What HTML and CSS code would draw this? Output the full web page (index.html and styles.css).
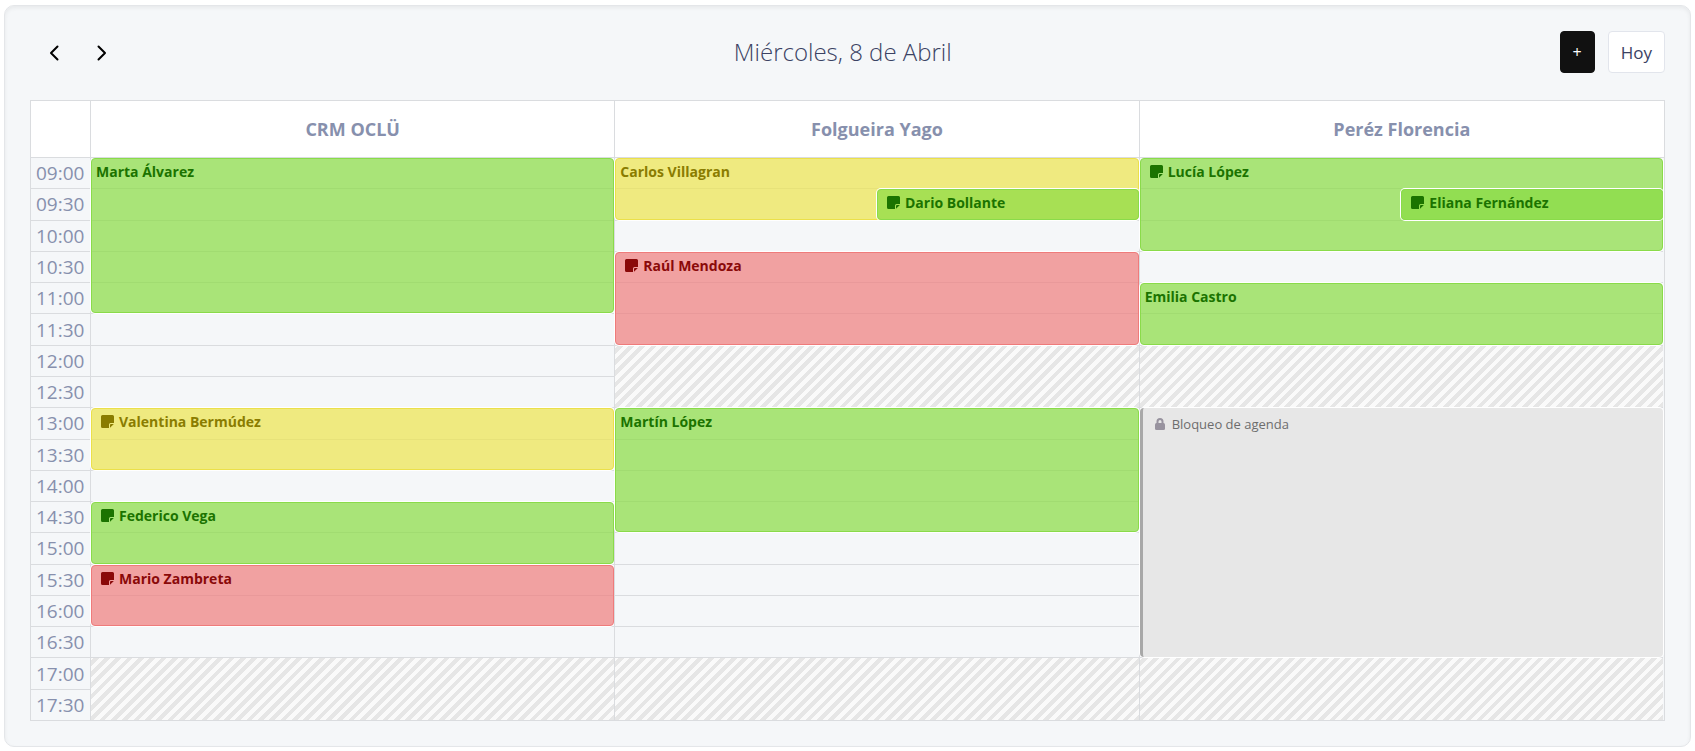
FILE: index.html
```html
<!DOCTYPE html>
<html lang="es">
<head>
    <meta charset="UTF-8">
    <meta name="viewport" content="width=device-width, initial-scale=1.0">
    <title>Agenda</title>
    <link rel="stylesheet" href="styles.css">
</head>
<body>
    <svg class="sprite" aria-hidden="true">
        <symbol id="note" viewBox="0 0 13 13">
            <path d="M1.500 0h10A1.500 1.500 0 0 1 13 1.500V8H9.500A1.500 1.500 0 0 0 8 9.500V13H1.500A1.500 1.500 0 0 1 0 11.500v-10A1.500 1.500 0 0 1 1.500 0z"/>
            <path d="M9 12.800V10a1 1 0 0 1 1-1h2.800z"/>
        </symbol>
    </svg>

    <main class="panel">
        <header class="toolbar">
            <div class="toolbar-nav">
                <button class="nav-btn" aria-label="Anterior">
                    <svg width="10" height="16" viewBox="0 0 10 16"><path d="M8.500 1.500L2 8l6.500 6.500"/></svg>
                </button>
                <button class="nav-btn" aria-label="Siguiente">
                    <svg width="10" height="16" viewBox="0 0 10 16"><path d="M1.500 1.500L8 8l-6.500 6.500"/></svg>
                </button>
            </div>
            <h1 class="toolbar-title">Miércoles, 8 de Abril</h1>
            <div class="toolbar-actions">
                <button class="btn btn-dark">+</button>
                <button class="btn btn-light">Hoy</button>
            </div>
        </header>

        <section class="schedule">
            <div class="head"></div>
            <div class="head">CRM OCLÜ</div>
            <div class="head">Folgueira Yago</div>
            <div class="head">Peréz Florencia</div>

            <div class="slots">
                <div class="slot">09:00</div>
                <div class="slot">09:30</div>
                <div class="slot">10:00</div>
                <div class="slot">10:30</div>
                <div class="slot">11:00</div>
                <div class="slot">11:30</div>
                <div class="slot">12:00</div>
                <div class="slot">12:30</div>
                <div class="slot">13:00</div>
                <div class="slot">13:30</div>
                <div class="slot">14:00</div>
                <div class="slot">14:30</div>
                <div class="slot">15:00</div>
                <div class="slot">15:30</div>
                <div class="slot">16:00</div>
                <div class="slot">16:30</div>
                <div class="slot">17:00</div>
                <div class="slot">17:30</div>
            </div>

            <!-- grid-row: one row per half hour, row 1 is 09:00 -->
            <div class="column crm">
                <div class="event green" style="grid-row: 1 / 6">Marta Álvarez</div>
                <div class="event yellow noted" style="grid-row: 9 / 11"><svg class="note"><use href="#note"/></svg>Valentina Bermúdez</div>
                <div class="event green noted" style="grid-row: 12 / 14"><svg class="note"><use href="#note"/></svg>Federico Vega</div>
                <div class="event red noted" style="grid-row: 14 / 16"><svg class="note"><use href="#note"/></svg>Mario Zambreta</div>
                <div class="closed" style="grid-row: 17 / 19"></div>
            </div>

            <div class="column yago">
                <div class="closed" style="grid-row: 7 / 9"></div>
                <div class="event yellow" style="grid-row: 1 / 3">Carlos Villagran</div>
                <div class="event green noted half" style="grid-row: 2 / 3"><svg class="note"><use href="#note"/></svg>Dario Bollante</div>
                <div class="event red noted" style="grid-row: 4 / 7"><svg class="note"><use href="#note"/></svg>Raúl Mendoza</div>
                <div class="event green" style="grid-row: 9 / 13">Martín López</div>
                <div class="closed" style="grid-row: 17 / 19"></div>
            </div>

            <div class="column florencia">
                <div class="closed" style="grid-row: 7 / 9"></div>
                <div class="closed" style="grid-row: 17 / 19"></div>
                <div class="event green noted" style="grid-row: 1 / 4"><svg class="note"><use href="#note"/></svg>Lucía López</div>
                <div class="event green noted half" style="grid-row: 2 / 3"><svg class="note"><use href="#note"/></svg>Eliana Fernández</div>
                <div class="event green" style="grid-row: 5 / 7">Emilia Castro</div>
                <div class="event blocked" style="grid-row: 9 / 17">
                    <svg class="lock" width="10" height="12" viewBox="0 0 10 12"><path class="shackle" d="M2.500 6V3.500a2.500 2.500 0 0 1 5 0V6"/><rect y="5" width="10" height="7" rx="1.500"/></svg>Bloqueo de agenda
                </div>
            </div>
        </section>
    </main>
</body>
</html>
```
FILE: styles.css
```css
* {
    box-sizing: border-box;
}

body {
    margin: 0;
    padding: 5px 4px 4px;
    min-height: 100vh;
    display: flex;
    background-color: #fff;
    color: #3b4263;
    font-family: "Open Sans", "Noto Sans", sans-serif;
}

button {
    font-family: inherit;
    cursor: pointer;
}

.sprite {
    position: absolute;
    width: 0;
    height: 0;
}

.panel {
    flex: 1;
    display: flex;
    flex-direction: column;
    padding: 25px;
    background-color: #f5f7f9;
    border: 1px solid #e4e6e9;
    border-radius: 10px;
    box-shadow: inset 0 2px 4px rgba(0, 0, 0, 0.06);
}

/* Toolbar */
.toolbar {
    display: flex;
    justify-content: space-between;
    align-items: center;
    margin-bottom: 27px;
}

.toolbar-nav {
    display: flex;
}

.nav-btn {
    width: 48px;
    height: 42px;
    padding: 2px 0 0;
    border: 0;
    background: none;
}

.nav-btn svg {
    display: block;
    margin: 0 auto;
    fill: none;
    stroke: #000;
    stroke-width: 2;
    stroke-linecap: round;
    stroke-linejoin: round;
}

.toolbar-title {
    margin: 0;
    font-size: 24px;
    font-weight: 300;
    line-height: 32px;
}

.toolbar-actions {
    display: flex;
    gap: 13px;
}

.btn {
    height: 42px;
    padding: 0 12px;
    border: 1px solid #e2e5ec;
    border-radius: 4px;
    font-size: 17px;
}

.btn-dark {
    background-color: #111;
    border-color: #111;
    color: #fff;
    font-size: 16px;
}

.btn-light {
    background-color: #fff;
    color: #3b4263;
}

/* Schedule */
.schedule {
    flex: 1;
    display: grid;
    grid-template-columns: 59px repeat(3, minmax(0, 1fr));
    grid-template-rows: 56px repeat(18, minmax(31px, 1fr));
    padding-right: 1px;
    border: 1px solid #dadcdf;
}

.head {
    display: flex;
    align-items: center;
    justify-content: center;
    position: relative;
    z-index: 2;
    margin-bottom: -1px;
    background-color: #fff;
    border-bottom: 1px solid #dadcdf;
    color: #8790ad;
    font-size: 18px;
    font-weight: 700;
}

.head + .head {
    border-left: 1px solid #dadcdf;
}

.head:nth-child(4) {
    margin-right: -1px;
}

.slots {
    grid-column: 1 / -1;
    grid-row: 2 / -1;
    display: grid;
    grid-template-rows: subgrid;
}

.slot {
    display: flex;
    align-items: center;
    padding-left: 5px;
    border-top: 1px solid #dadcdf;
    color: #8790ad;
    font-size: 19px;
    line-height: 24px;
}

.column {
    grid-row: 2 / -1;
    display: grid;
    grid-template-columns: repeat(2, minmax(0, 1fr));
    grid-template-rows: subgrid;
    border-left: 1px solid #dadcdf;
}

.crm {
    grid-column: 2;
}

.yago {
    grid-column: 3;
}

.florencia {
    grid-column: 4;
}

.event {
    grid-column: 1 / -1;
    margin-top: 1px;
    padding: 3px 4px;
    border: 1px solid;
    border-radius: 4px;
    box-shadow: 0 0 0 1px #fff;
    font-size: 14px;
    font-weight: 700;
    line-height: 20px;
}

.noted {
    padding-left: 9px;
}

.half {
    grid-column: 2;
}

.green {
    background-color: rgba(137, 220, 66, 0.7);
    border-color: #8adb4a;
    color: #1b7300;
}

.yellow {
    background-color: rgba(237, 228, 77, 0.7);
    border-color: #ebe04a;
    color: #8a7c00;
}

.red {
    background-color: rgba(240, 124, 124, 0.7);
    border-color: #ef7b7b;
    color: #8a0909;
}

.note {
    width: 13px;
    height: 13px;
    margin-right: 5px;
    vertical-align: -1px;
    fill: currentColor;
}

.closed {
    grid-column: 1 / -1;
    margin-top: 1px;
    background: repeating-linear-gradient(-45deg, #e6e6e6 0 4px, #fafafa 4px 8px);
}

.blocked {
    padding: 6px 12px;
    background-color: #e7e7e7;
    border: 0;
    border-left: 3px solid #a8a8a8;
    color: #6d6d6d;
    font-size: 13px;
    font-weight: 400;
}

.lock {
    margin-right: 7px;
    vertical-align: -1px;
    fill: #98939f;
}

.shackle {
    fill: none;
    stroke: #98939f;
    stroke-width: 2;
}
```
